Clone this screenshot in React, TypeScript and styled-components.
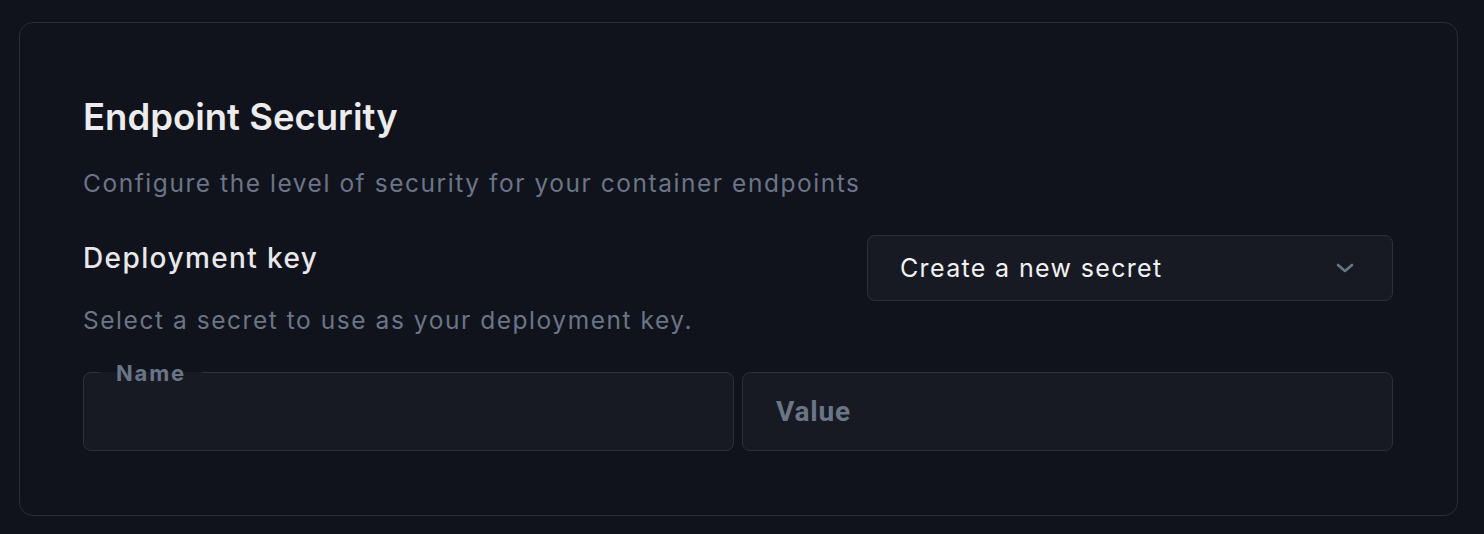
import { createGlobalStyle } from 'styled-components';
import styled from 'styled-components';

const GlobalStyle = createGlobalStyle`
  html, body {
    margin: 0;
    padding: 0;
    background: #10131b;
  }

  body {
    font-family: Inter, "Noto Sans", sans-serif;
    -webkit-font-smoothing: antialiased;
  }
`;

const Page = styled.div`
  padding: 22px 26px 18px 19px;
`;

const Card = styled.section`
  border: 1px solid #2a2e37;
  border-radius: 14px;
  background: #10131b;
  padding: 72px 64px 64px 63px;
`;

const Title = styled.h2`
  margin: 0;
  font-size: 36.5px;
  font-weight: 600;
  line-height: 44px;
  letter-spacing: 0px;
  color: #ececee;
`;

const Muted = styled.p<{ $top?: number }>`
  margin: ${({ $top }) => $top ?? 0}px 0 0;
  font-size: 24.5px;
  line-height: 32px;
  letter-spacing: 1.55px;
  color: #6b7588;
`;

const KeyRow = styled.div`
  display: grid;
  grid-template-columns: 1fr 526px;
  align-items: start;
  margin-top: 36px;
`;

const Label = styled.h3`
  margin: 5px 0 0;
  font-size: 28px;
  font-weight: 500;
  line-height: 36px;
  letter-spacing: 1.4px;
  color: #e8e8ea;
`;

const Select = styled.button`
  display: flex;
  align-items: center;
  justify-content: space-between;
  height: 66px;
  padding: 0 38px 0 32px;
  border: 1px solid #2c3039;
  border-radius: 8px;
  background: #171a22;
  color: #f1f1f3;
  font-family: Inter, "Noto Sans", sans-serif;
  font-size: 25px;
  letter-spacing: 1.35px;
  cursor: pointer;
`;

const Chevron = styled.svg`
  width: 18px;
  height: 10px;
  color: #6b7385;
`;

const Fields = styled.div`
  display: grid;
  grid-template-columns: 1fr 1fr;
  gap: 8px;
  margin-top: 36px;
`;

const Field = styled.fieldset`
  margin: 0;
  height: 79px;
  box-sizing: border-box;
  padding: 0 32px;
  border: 1px solid #2c3039;
  border-radius: 8px;
  background: #171a22;
  min-width: 0;
`;

const FloatingLabel = styled.legend`
  margin-left: -16px;
  padding: 0 16px;
  font-size: 22px;
  font-weight: 700;
  line-height: 1;
  letter-spacing: 1.8px;
  color: #6b7588;
  height: 0;
  transform: translateY(-11px);
`;

const ValueBox = styled.div`
  display: flex;
  align-items: center;
  height: 79px;
  box-sizing: border-box;
  padding: 0 33px;
  border: 1px solid #2c3039;
  border-radius: 8px;
  background: #171a22;
  font-family: Roboto, "Liberation Sans", sans-serif;
  font-size: 28px;
  font-weight: 700;
  letter-spacing: 0.8px;
  color: #6b7588;
`;

export default function App() {
  return (
    <>
      <GlobalStyle />
      <Page>
        <Card>
          <Title>Endpoint Security</Title>
          <Muted $top={28}>Configure the level of security for your container endpoints</Muted>
          <KeyRow>
            <div>
              <Label>Deployment key</Label>
              <Muted $top={28}>Select a secret to use as your deployment key.</Muted>
            </div>
            <Select type="button">
              <span>Create a new secret</span>
              <Chevron viewBox="0 0 18 10" fill="none">
                <path d="M2 2l7 6 7-6" stroke="currentColor" strokeWidth="2.6" strokeLinecap="round" strokeLinejoin="round" />
              </Chevron>
            </Select>
          </KeyRow>
          <Fields>
            <Field>
              <FloatingLabel>Name</FloatingLabel>
            </Field>
            <ValueBox>Value</ValueBox>
          </Fields>
        </Card>
      </Page>
    </>
  );
}
